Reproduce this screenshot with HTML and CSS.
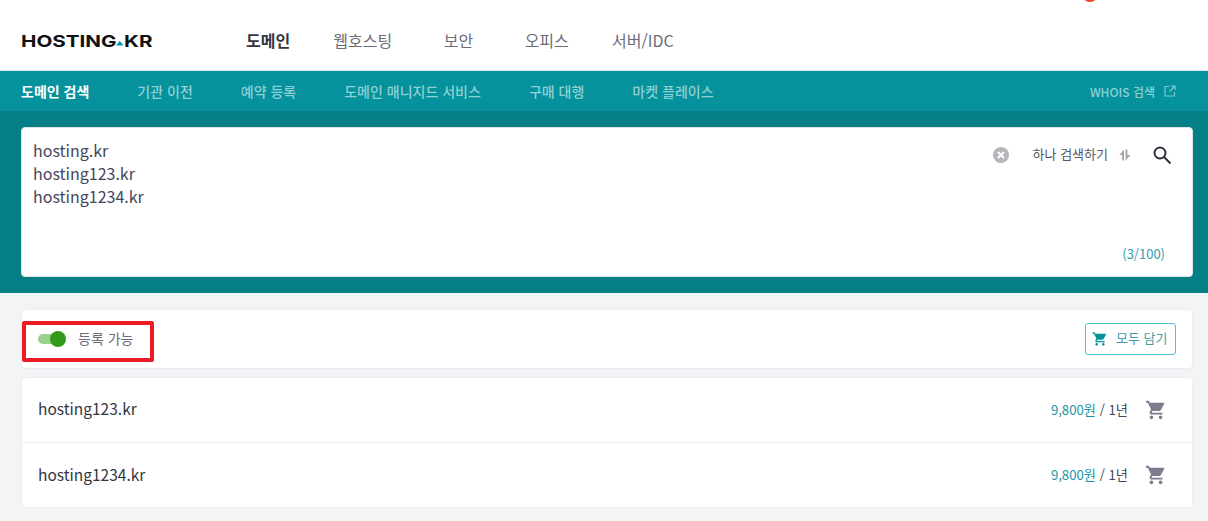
FILE: index.html
```html
<!DOCTYPE html>
<html lang="ko">
<head>
<meta charset="utf-8">
<title>HOSTING.KR</title>
<link rel="stylesheet" href="styles.css">
</head>
<body>
<div class="page">
  <span class="notify-dot"></span>
  <header class="top">
    <a class="logo"><span class="logo-text">HOSTING<svg class="logo-tri" width="8" height="12" viewBox="0 0 8 12"><path d="M0 12L4 5.500L8 12Z" fill="#069aa3"/></svg>KR</span></a>
    <nav class="main-nav">
      <a class="main-link active">도메인</a>
      <a class="main-link">웹호스팅</a>
      <a class="main-link wide">보안</a>
      <a class="main-link">오피스</a>
      <a class="main-link">서버/IDC</a>
    </nav>
  </header>
  <nav class="sub-nav">
    <a class="sub-link active">도메인 검색</a>
    <a class="sub-link">기관 이전</a>
    <a class="sub-link">예약 등록</a>
    <a class="sub-link">도메인 매니지드 서비스</a>
    <a class="sub-link">구매 대행</a>
    <a class="sub-link">마켓 플레이스</a>
    <a class="whois">WHOIS 검색
      <svg width="12" height="12" viewBox="0 0 12 12" fill="none" stroke="#7fcbd0" stroke-width="1.200"><path d="M5 1.500H1V11H10.500V7"/><path d="M7 1H11V5M11 1L5.500 6.500"/></svg>
    </a>
  </nav>
  <section class="search-band">
    <div class="search-box">
      <div class="queries">
        <div>hosting.kr</div>
        <div>hosting123.kr</div>
        <div>hosting1234.kr</div>
      </div>
      <div class="search-tools">
        <svg class="clear" width="16" height="16" viewBox="0 0 16 16"><circle cx="8" cy="8" r="8" fill="#b4b6ba"/><path d="M5 5L11 11M11 5L5 11" stroke="#fff" stroke-width="2"/></svg>
        <span class="mode">하나 검색하기</span>
        <svg class="swap" width="12" height="12" viewBox="0 0 12 12" fill="#a3a5ab"><path d="M5 11.500V.5L.5 6H3.200V11.500Z"/><path d="M6.600 .5H8.400V6H11.500L6.600 11.500Z"/></svg>
        <svg class="magnify" width="20" height="20" viewBox="0 0 20 20" fill="none" stroke="#2d3040" stroke-width="2"><circle cx="8" cy="8" r="5.500"/><path d="M12 12L18.500 18.500"/></svg>
      </div>
      <div class="count">(3/100)</div>
    </div>
  </section>
  <main class="content">
    <div class="card filter">
      <div class="toggle-wrap">
        <span class="track"><span class="knob"></span></span>
        <span class="toggle-label">등록 가능</span>
      </div>
      <button class="add-all">
        <svg width="16" height="16" viewBox="0 0 24 24" fill="#05929c"><path d="M7 18c-1.100 0-2 .9-2 2s.9 2 2 2 2-.9 2-2-.9-2-2-2zM1 2v2h2l3.600 7.590-1.350 2.450c-.16.28-.25.61-.25.960 0 1.100.9 2 2 2h12v-2H7.420c-.14 0-.25-.11-.25-.25l.03-.12.9-1.630h7.450c.75 0 1.410-.41 1.750-1.030l3.580-6.490A1 1 0 0 0 20.010 4H5.210l-.94-2H1zm16 16c-1.100 0-2 .9-2 2s.9 2 2 2 2-.9 2-2-.9-2-2-2z"/></svg>
        <span class="add-label">모두 담기</span>
      </button>
    </div>
    <div class="card results">
      <div class="row">
        <span class="domain">hosting123.kr</span>
        <span class="price"><b>9,800원</b> / 1년</span>
        <svg class="cart" width="22" height="22" viewBox="0 0 24 24" fill="#7d7d90"><path d="M7 18c-1.100 0-2 .9-2 2s.9 2 2 2 2-.9 2-2-.9-2-2-2zM1 2v2h2l3.600 7.590-1.350 2.450c-.16.28-.25.61-.25.960 0 1.100.9 2 2 2h12v-2H7.420c-.14 0-.25-.11-.25-.25l.03-.12.9-1.630h7.450c.75 0 1.410-.41 1.750-1.030l3.580-6.490A1 1 0 0 0 20.010 4H5.210l-.94-2H1zm16 16c-1.100 0-2 .9-2 2s.9 2 2 2 2-.9 2-2-.9-2-2-2z"/></svg>
      </div>
      <div class="row">
        <span class="domain">hosting1234.kr</span>
        <span class="price"><b>9,800원</b> / 1년</span>
        <svg class="cart" width="22" height="22" viewBox="0 0 24 24" fill="#7d7d90"><path d="M7 18c-1.100 0-2 .9-2 2s.9 2 2 2 2-.9 2-2-.9-2-2-2zM1 2v2h2l3.600 7.590-1.350 2.450c-.16.28-.25.61-.25.960 0 1.100.9 2 2 2h12v-2H7.420c-.14 0-.25-.11-.25-.25l.03-.12.9-1.630h7.450c.75 0 1.410-.41 1.750-1.030l3.580-6.490A1 1 0 0 0 20.010 4H5.210l-.94-2H1zm16 16c-1.100 0-2 .9-2 2s.9 2 2 2 2-.9 2-2-.9-2-2-2z"/></svg>
      </div>
    </div>
    <span class="highlight"></span>
  </main>
</div>
</body>
</html>
```
FILE: styles.css
```css
* { box-sizing: border-box; }
html, body { margin: 0; padding: 0; }
body {
  font-family: "Noto Sans CJK KR", "Noto Sans", sans-serif;
  background: #f3f4f6;
  color: #33353f;
  overflow: hidden;
}
.page { position: relative; width: 1208px; height: 521px; overflow: hidden; }
.notify-dot {
  position: absolute; left: 1082px; top: -7px;
  width: 16px; height: 9px; border-radius: 0 0 8px 8px; background: #f0431a;
}
.top {
  height: 71px; background: #fff; display: flex; align-items: center;
  padding: 11px 0 0 21px;
  border-bottom: 1px solid #e8eaee;
}
.logo { display: flex; align-items: center; width: 131px; height: 14px; flex: none; }
.logo-text {
  display: inline-flex; align-items: center; height: 14px;
  font: 700 16.500px/14px "Inter", sans-serif; color: #111;
  white-space: nowrap; transform: scaleX(1.250); transform-origin: 0 50%;
}
.logo-tri { flex: none; width: 6px; }
.main-nav { display: flex; margin: 0 0 2px 94px; gap: 43.200px; }
.main-link { font-size: 16px; line-height: 24px; color: #6b6d78; text-align: center; }
.main-link.wide { min-width: 46px; }
.main-link.active { color: #33353f; font-weight: 700; }
.sub-nav {
  height: 40px; background: #05929c; display: flex; align-items: center;
  padding: 0 32px 0 21px; gap: 48px;
}
.sub-link { font-size: 14px; color: #8ed0d4; font-weight: 500; line-height: 20px; }
.sub-link.active { color: #fff; font-weight: 700; }
.whois {
  margin-left: auto; display: flex; align-items: center; gap: 9px;
  font-size: 12px; font-weight: 500; color: #8ed0d4;
}
.search-band { height: 182px; background: #047f85; padding: 16px 15px 16px 21px; }
.search-box {
  position: relative; height: 150px; background: #fff; border: 1px solid #dfe3e6;
  border-radius: 4px; padding: 11px 11px;
}
.queries { font-size: 16px; line-height: 23px; color: #44465a; }
.search-tools {
  position: absolute; top: 15px; right: 20px; display: flex; align-items: center; height: 24px;
}
.clear { margin-right: 24px; }
.mode { font-size: 13px; line-height: 18px; margin-bottom: 2px; color: #55545f; margin-right: 11px; }
.swap { margin-right: 21px; }
.count { position: absolute; right: 27px; bottom: 13px; font-size: 13px; line-height: 18px; color: #2f9eb0; }
.content { position: relative; padding: 16px 15px 0 21px; }
.card { background: #fff; border: 1px solid #ebedf2; border-radius: 4px; }
.filter {
  height: 60px; display: flex; align-items: center; justify-content: space-between;
  padding: 0 16px 0 16px; margin-bottom: 8px;
}
.toggle-wrap { display: flex; align-items: center; height: 20px; }
.track {
  position: relative; display: block; width: 24px; height: 10px; border-radius: 5px; background: #98d08d; margin-right: 16px;
}
.knob {
  position: absolute; left: 12px; top: -3px; width: 16px; height: 16px; border-radius: 50%; background: #329a18;
}
.toggle-label { font-size: 14px; line-height: 18px; margin-bottom: 2px; color: #6b6d78; }
.add-all {
  display: flex; align-items: center; gap: 8px; height: 32px; width: 91px; padding: 0 6px;
  background: #fff; border: 1px solid #4fc4d0; border-radius: 3px;
  font-family: inherit; font-size: 13px; color: #4b9aa3;
}
.add-label { line-height: 18px; margin-bottom: 2px; }
.results { height: 131px; }
.row {
  height: 65px; display: flex; align-items: center; padding: 0 25px 0 16px;
  border-bottom: 1px solid #ebedf2;
}
.row:last-child { border-bottom: 0; }
.domain { font-size: 15.500px; line-height: 20px; margin-bottom: 4px; color: #33353f; flex: 1; }
.price { font-size: 13.200px; line-height: 18px; margin-bottom: 1px; color: #44465a; margin-right: 17px; }
.price b { font-weight: 400; color: #1b95a5; }
.cart { margin-bottom: 1px; }
.highlight {
  position: absolute; left: 22px; top: 28px; width: 132px; height: 41px;
  border: 4px solid #ed1c24; border-radius: 2px; pointer-events: none;
}
```
